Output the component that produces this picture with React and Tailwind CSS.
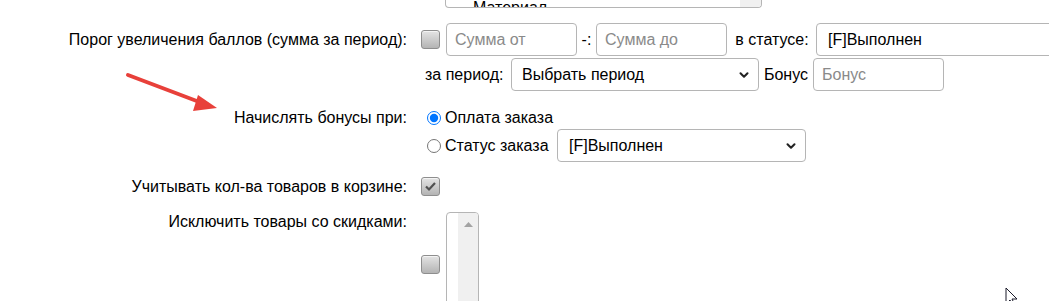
import { ChevronDown } from "lucide-react";

const FakeCheck = ({ checked }) => (
    <span className="inline-flex w-[19px] h-[19px] shrink-0 items-center justify-center rounded-[3px] border border-[#8e8e8e] bg-gradient-to-b from-[#e4e4e4] to-[#b4b4b4] shadow-[inset_0_1px_0_#f4f4f4]">
        {checked && (
            <svg width="13" height="11" viewBox="0 0 13 11">
                <path d="M2 5.5 L5 8.5 L11 2" fill="none" stroke="#505050" strokeWidth="2.2" />
            </svg>
        )}
    </span>
);

const TextInput = ({ placeholder, width }) => (
    <input
        type="text"
        placeholder={placeholder}
        className={`${width} h-[33px] shrink-0 border border-[#b5b5b5] rounded-[4px] pl-[8px] bg-white outline-none placeholder:text-[#8a8a8a]`}
    />
);

const Select = ({ value, width, pad }) => (
    <div className={`relative ${width} h-[33px] shrink-0`}>
        <select
            defaultValue={value}
            className={`appearance-none w-full h-full border border-[#b5b5b5] rounded-[4px] ${pad} bg-white outline-none`}
        >
            <option>{value}</option>
        </select>
        <ChevronDown size={14} strokeWidth={3.5} className="absolute right-[8px] top-1/2 -translate-y-1/2 text-[#222] pointer-events-none" />
    </div>
);

export default function App() {
    return (
        <div className="relative w-[1049px] h-[301px] overflow-hidden bg-white text-[16px] text-black font-['Liberation_Sans',Arial,sans-serif]">
            {/* listbox cut at the top */}
            <div className="ml-[445px] w-[317px] h-[8px] flex border-x border-b border-[#b5b5b5] rounded-b-[4px] overflow-hidden">
                <div className="flex-1 pl-[27px] leading-[15px]">Материал</div>
                <div className="w-[21px] bg-[#f0f0f0]" />
            </div>

            {/* Порог */}
            <div className="flex mt-[15px]">
                <div className="w-[407px] shrink-0 text-right leading-[33px]">Порог увеличения баллов (сумма за период):</div>
                <div className="pl-[14px] flex-1">
                    <div className="flex items-center h-[33px] whitespace-nowrap">
                        <FakeCheck />
                        <span className="ml-[6px] flex"><TextInput placeholder="Сумма от" width="w-[131px]" /></span>
                        <span className="w-[19px] text-center">-:</span>
                        <TextInput placeholder="Сумма до" width="w-[131px]" />
                        <span className="w-[89px] pl-[1px] text-center">в статусе:</span>
                        <Select value="[F]Выполнен" width="w-[300px]" pad="pl-[11px]" />
                    </div>
                    <div className="flex items-center h-[33px] mt-[2px] whitespace-nowrap">
                        <span className="w-[90px] pl-[4px]">за период:</span>
                        <Select value="Выбрать период" width="w-[248px]" pad="pl-[10px]" />
                        <span className="w-[54px] text-center">Бонус</span>
                        <TextInput placeholder="Бонус" width="w-[131px]" />
                    </div>
                </div>
            </div>

            {/* Начислять */}
            <div className="flex mt-[18px]">
                <div className="w-[407px] shrink-0 text-right leading-[18px]">Начислять бонусы при:</div>
                <div className="pl-[14px]">
                    <label className="flex items-center h-[18px]">
                        <input type="radio" name="on" defaultChecked className="ml-[6px] w-[14px] h-[14px] accent-[#0075ff]" />
                        <span className="ml-[4px]">Оплата заказа</span>
                    </label>
                    <label className="flex items-center h-[33px] mt-[2px]">
                        <input type="radio" name="on" className="ml-[6px] w-[14px] h-[14px]" />
                        <span className="w-[116px] pl-[4px]">Статус заказа</span>
                        <Select value="[F]Выполнен" width="w-[249px]" pad="pl-[11px]" />
                    </label>
                </div>
            </div>

            {/* Учитывать */}
            <div className="flex mt-[15px]">
                <div className="w-[407px] shrink-0 text-right leading-[19px]">Учитывать кол-ва товаров в корзине:</div>
                <div className="pl-[14px] flex">
                    <FakeCheck checked />
                </div>
            </div>

            {/* Исключить */}
            <div className="flex mt-[16px]">
                <div className="w-[407px] shrink-0 text-right leading-[20px]">Исключить товары со скидками:</div>
                <div className="pl-[14px] flex items-center">
                    <FakeCheck />
                    <div className="ml-[6px] w-[33px] h-[104px] flex border border-[#b5b5b5] rounded-[4px] overflow-hidden">
                        <div className="w-[11px]" />
                        <div className="flex-1 bg-[#f0f0f0] flex justify-center pt-[9px]">
                            <svg width="9" height="5" viewBox="0 0 9 5">
                                <path d="M0 5 L4.5 0 L9 5 Z" fill="#a3a3a3" />
                            </svg>
                        </div>
                    </div>
                </div>
            </div>

            {/* red annotation arrow */}
            <svg className="absolute left-0 top-0 pointer-events-none" width="1049" height="301">
                <line x1="128" y1="75" x2="202" y2="103" stroke="#e8403a" strokeWidth="4" strokeLinecap="round" />
                <path d="M217 108 L193 111 L198 95 Z" fill="#e8403a" />
            </svg>

            {/* mouse cursor */}
            <svg className="absolute left-[1005px] top-[287px] pointer-events-none" width="14" height="20" viewBox="0 0 14 20">
                <path d="M1 1 L1 17 L5 13 L8 19 L10 18 L7 12 L12 12 Z" fill="#fff" stroke="#1a1a2a" strokeWidth="1" />
            </svg>
        </div>
    );
}
